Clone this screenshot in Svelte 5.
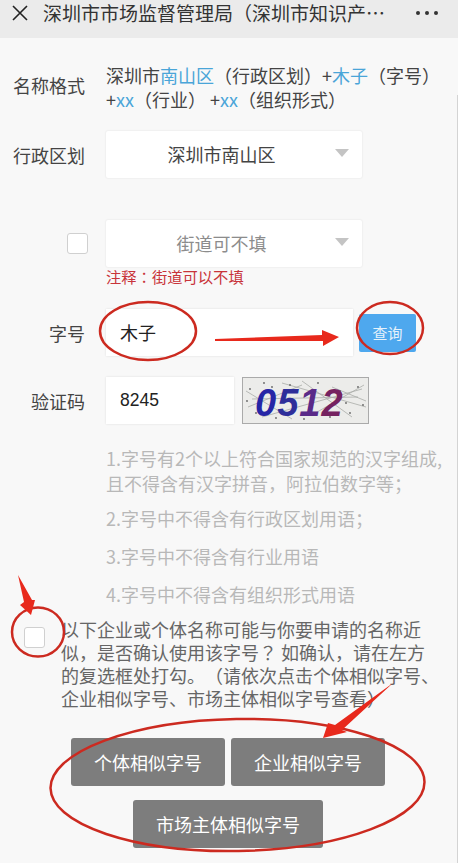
<script>
  const hints = [
    '1.字号有2个以上符合国家规范的汉字组成,且不得含有汉字拼音，阿拉伯数字等；',
    '2.字号中不得含有行政区划用语；',
    '3.字号中不得含有行业用语',
    '4.字号中不得含有组织形式用语'
  ];
  const noise = [
    [6, 30, 60, 8], [20, 40, 120, 12], [40, 6, 124, 30], [70, 38, 122, 8],
    [4, 14, 50, 42], [90, 10, 124, 24], [10, 22, 116, 20], [60, 4, 110, 40]
  ];
  const specks = [
    [8, 12], [14, 36], [22, 6], [34, 41], [48, 8], [62, 42], [76, 6], [88, 40],
    [98, 14], [108, 36], [116, 10], [121, 28], [5, 24], [70, 24], [104, 26], [30, 10]
  ];
</script>

<div class="page">
  <header class="topbar">
    <svg class="close" viewBox="0 0 18 18" aria-hidden="true">
      <path d="M2 2 L16 16 M16 2 L2 16" />
    </svg>
    <div class="title">深圳市市场监督管理局（深圳市知识产权局）</div>
    <div class="dots"><i></i><i></i><i></i></div>
  </header>

  <main class="form">
    <div class="row format-row">
      <div class="label">名称格式</div>
      <div class="format">
        深圳市<span class="blue">南山区</span>（行政区划）+<span class="blue">木子</span>（字号）+<span class="blue">xx</span>（行业） +<span class="blue">xx</span>（组织形式）
      </div>
    </div>

    <div class="row district-row">
      <div class="label">行政区划</div>
      <div class="select">深圳市南山区<span class="caret"></span></div>
    </div>

    <div class="row street-row">
      <div class="label"><span class="check small"></span></div>
      <div class="select muted">街道可不填<span class="caret"></span></div>
    </div>
    <div class="note">注释<span class="jp">：</span>街道可以不填</div>

    <div class="row name-row">
      <div class="label">字号</div>
      <div class="input name">木子</div>
      <button class="query">查询</button>
    </div>

    <div class="row code-row">
      <div class="label">验证码</div>
      <div class="input code">8245</div>
      <svg class="captcha" viewBox="0 0 127 47" aria-label="0512">
        <rect width="127" height="47" fill="#ececea" />
        {#each noise as [x1, y1, x2, y2]}
          <line {x1} {y1} {x2} {y2} stroke="#a9aca8" stroke-width="0.8" />
        {/each}
        {#each specks as [cx, cy]}
          <circle {cx} {cy} r="0.9" fill="#666" />
        {/each}
        <text x="13" y="39" class="captcha-text">
          <tspan fill="#2626a6">0</tspan><tspan fill="#2e2e9a">5</tspan><tspan fill="#5a2a88">1</tspan><tspan fill="#752260">2</tspan>
        </text>
        <rect x="0.5" y="0.5" width="126" height="46" fill="none" stroke="#aaa" />
      </svg>
    </div>

    <div class="hints">
      {#each hints as hint}
        <p>{hint}</p>
      {/each}
    </div>

    <div class="confirm">
      <span class="check"></span>
      <p>以下企业或个体名称可能与你要申请的名称近<br />似，是否确认使用该字号<span class="jp">？</span> 如确认，请在左方的复选框处打勾。（请依次点击个体相似字号、企业相似字号、市场主体相似字号查看）</p>
    </div>

    <div class="actions">
      <button>个体相似字号</button>
      <button>企业相似字号</button>
      <button>市场主体相似字号</button>
    </div>
  </main>

  <div class="scrollbar"></div>

  <svg class="marks" viewBox="0 0 458 863" aria-hidden="true">
    <ellipse cx="148" cy="331" rx="48" ry="29" />
    <ellipse cx="390" cy="328" rx="33" ry="26" />
    <ellipse cx="38" cy="632" rx="26" ry="24.5" />
    <ellipse cx="237.5" cy="785" rx="187" ry="66" transform="rotate(-1 237 785)" />
    <polygon points="215,339 322,335 322,330 339,337 323,346 323,341 215,341" />
    <polygon points="18,575 32,600 35,600 31,615 20,605 24,602" />
    <polygon points="393,683 342,730 347,732 323,738 328,723 335,725" />
  </svg>
</div>

<style>
  :global(body) {
    margin: 0;
    background: #f8f8f8;
  }

  .page {
    position: relative;
    width: 458px;
    height: 863px;
    overflow: hidden;
    background: #f8f8f8;
    font-family: "Noto Sans CJK SC", "Liberation Sans", sans-serif;
    font-size: 18px;
    color: #444;
    text-spacing-trim: space-all;
  }

  .jp {
    font-family: "Noto Sans CJK JP", sans-serif;
  }

  .topbar {
    display: flex;
    align-items: center;
    height: 22px;
    padding: 2px 20px 14px 11px;
    background: #ebebeb;
    color: #333;
  }

  .close {
    width: 18px;
    height: 18px;
    flex: none;
    margin-right: 14px;
    fill: none;
    stroke: #222;
    stroke-width: 1.6;
  }

  .title {
    flex: none;
    width: 349px;
    font-size: 19px;
    line-height: 22px;
    white-space: nowrap;
    overflow: hidden;
    text-overflow: ellipsis;
  }

  .dots {
    display: flex;
    gap: 5px;
    margin-left: auto;
  }

  .dots i {
    width: 4px;
    height: 4px;
    border-radius: 50%;
    background: #333;
  }

  .form {
    padding-top: 25px;
  }

  .row {
    display: flex;
    align-items: center;
  }

  .label {
    flex: none;
    width: 85px;
    margin-right: 21px;
    text-align: right;
    line-height: 24px;
  }

  .format-row {
    height: 47px;
  }

  .format-row .label {
    padding-bottom: 3px;
  }

  .format {
    width: 335px;
    line-height: 24px;
    word-break: break-all;
  }

  .blue {
    color: #4aa5d8;
  }

  .select {
    position: relative;
    width: 256px;
    height: 47px;
    line-height: 47px;
    text-align: center;
    background: #fff;
    box-shadow: 0 0 2px #ddd;
    border-radius: 2px;
    padding-right: 25px;
    box-sizing: border-box;
  }

  .select.muted {
    color: #8c8c8c;
  }

  .caret {
    position: absolute;
    right: 13px;
    top: 18px;
    border: 7px solid transparent;
    border-top: 8px solid #c4c4c4;
    border-bottom: 0;
  }

  .district-row {
    margin-top: 21px;
  }

  .street-row {
    margin-top: 42px;
  }

  .check {
    display: block;
    flex: none;
    width: 19px;
    height: 19px;
    background: #fff;
    border: 1px solid #d0d0d0;
    border-radius: 3px;
  }

  .check.small {
    margin-left: auto;
    margin-right: -3px;
  }

  .note {
    margin: -2px 0 0 106px;
    font-size: 15.3px;
    line-height: 22px;
    color: #c8343a;
  }

  .name-row {
    margin-top: 22px;
  }

  .input {
    height: 47px;
    line-height: 47px;
    padding-left: 14px;
    background: #fff;
    box-shadow: 0 0 2px #ddd;
    box-sizing: border-box;
    color: #222;
  }

  .input.name {
    width: 247px;
  }

  .input.code {
    width: 128px;
    font-family: "Liberation Sans", sans-serif;
    font-size: 17.5px;
  }

  .query {
    width: 57px;
    height: 38px;
    margin-left: 6px;
    padding: 0;
    border: 0;
    border-radius: 2px;
    background: #4ea8ee;
    color: #e6f2fb;
    font: inherit;
    font-size: 15px;
  }

  .code-row {
    margin-top: 21px;
  }

  .captcha {
    width: 127px;
    height: 47px;
    margin-left: 8px;
  }

  .captcha-text {
    font-family: "Liberation Sans", sans-serif;
    font-size: 38px;
    font-weight: 700;
    font-style: italic;
    letter-spacing: 1px;
  }

  .hints {
    margin: 22px 14px 0 106px;
    color: #b8b8b8;
  }

  .hints p {
    margin: 0 0 13.5px;
    line-height: 24.5px;
    word-break: break-all;
  }

  .hints p:first-child {
    margin-bottom: 11px;
  }

  .confirm {
    display: flex;
    align-items: flex-start;
    margin-top: -2px;
    padding-left: 24px;
  }

  .confirm .check {
    margin: 9px 16px 0 0;
  }

  .confirm p {
    width: 380px;
    flex: none;
    margin: 0;
    line-height: 23px;
    color: #666;
    word-break: break-all;
  }

  .actions {
    display: flex;
    flex-wrap: wrap;
    justify-content: center;
    gap: 14px 6px;
    width: 316px;
    margin: 28px 0 0 70px;
  }

  .actions button {
    height: 48px;
    width: 154px;
    padding: 0;
    border: 0;
    border-radius: 3px;
    background: #7d7d7d;
    color: #fff;
    font: inherit;
  }

  .actions button:last-child {
    width: 190px;
  }

  .scrollbar {
    position: absolute;
    top: 95px;
    right: 0;
    bottom: 0;
    width: 1px;
    background: #d4d4d4;
  }

  .marks {
    position: absolute;
    inset: 0;
    width: 458px;
    height: 863px;
    pointer-events: none;
  }

  .marks ellipse {
    fill: none;
    stroke: #cc2a20;
    stroke-width: 2.5;
  }

  .marks polygon {
    fill: #e8291c;
  }
</style>
